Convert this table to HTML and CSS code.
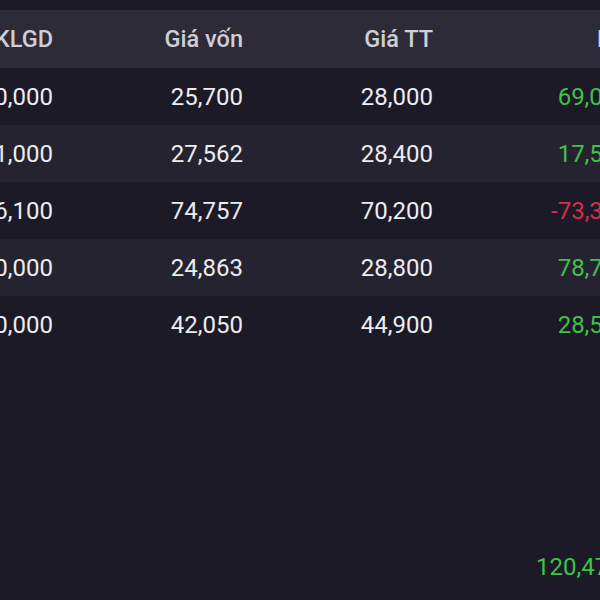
FILE: index.html
```html
<!DOCTYPE html>
<html lang="vi">
  <head>
    <meta charset="UTF-8" />
    <meta name="viewport" content="width=device-width, initial-scale=1.0" />
    <title>Danh mục</title>
    <link rel="stylesheet" href="styles.css">
  </head>
  <body>
    <div class="portfolio">
      <div class="row head">
        <div class="cell">KLGD</div>
        <div class="cell">Giá vốn</div>
        <div class="cell">Giá TT</div>
        <div class="cell pl-head">Lãi/Lỗ</div>
      </div>

      <div class="row">
        <div class="cell">30,000</div>
        <div class="cell">25,700</div>
        <div class="cell">28,000</div>
        <div class="cell up">69,000,000</div>
      </div>
      <div class="row alt">
        <div class="cell">21,000</div>
        <div class="cell">27,562</div>
        <div class="cell">28,400</div>
        <div class="cell up">17,598,000</div>
      </div>
      <div class="row">
        <div class="cell">16,100</div>
        <div class="cell">74,757</div>
        <div class="cell">70,200</div>
        <div class="cell down">-73,367,700</div>
      </div>
      <div class="row alt">
        <div class="cell">20,000</div>
        <div class="cell">24,863</div>
        <div class="cell">28,800</div>
        <div class="cell up">78,740,000</div>
      </div>
      <div class="row">
        <div class="cell">10,000</div>
        <div class="cell">42,050</div>
        <div class="cell">44,900</div>
        <div class="cell up">28,500,000</div>
      </div>

      <div class="total">
        <span class="up">120,470,300</span>
      </div>
    </div>
  </body>
</html>
```

FILE: styles.css
```css
body {
  margin: 0;
  background-color: #1c1a26;
  font-family: Roboto, "Liberation Sans", sans-serif;
  overflow: hidden;
}
.portfolio {
  width: 820px;
  margin-left: -137px;
  padding-top: 10px;
}
.row {
  display: grid;
  grid-template-columns: 190px 190px 190px 250px;
  height: 57px;
  align-items: center;
  font-size: 24px;
  color: #ececf1;
}
.row.head {
  height: 58px;
  background-color: #2d2b38;
  color: #cfced6;
  font-size: 23.5px;
  font-weight: 500;
}
.row.alt {
  background-color: #25232f;
}
.cell {
  text-align: right;
  white-space: nowrap;
}
.cell:nth-child(4) {
  padding-right: 8px;
}
.row.head .pl-head {
  text-align: left;
  padding-left: 164px;
}
.up {
  color: #3ec24c;
}
.down {
  color: #d4304b;
}
.total {
  margin-top: 200px;
  padding-left: 673px;
  font-size: 24px;
}
```
